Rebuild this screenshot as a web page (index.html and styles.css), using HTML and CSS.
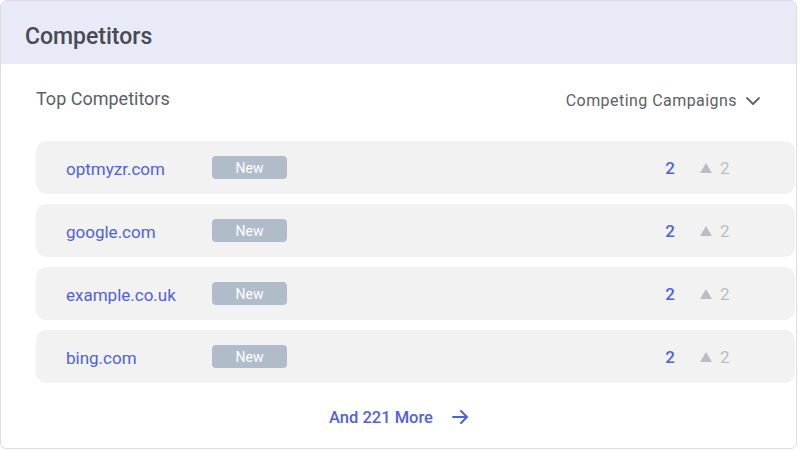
FILE: index.html
```html
<!DOCTYPE html>
<html lang="en">
<head>
    <meta charset="UTF-8">
    <meta name="viewport" content="width=device-width, initial-scale=1.0">
    <title>Competitors</title>
    <link rel="stylesheet" href="styles.css">
</head>
<body>
    <div class="card">
        <header class="card-header">
            <h2>Competitors</h2>
        </header>

        <div class="card-body">
            <div class="toolbar">
                <span class="toolbar-title">Top Competitors</span>
                <button class="sort-select">
                    Competing Campaigns
                    <svg width="16" height="16" viewBox="0 0 16 16"><path d="M2 5l6 6 6-6" fill="none" stroke="#5f6368" stroke-width="1.8" stroke-linecap="round" stroke-linejoin="round"/></svg>
                </button>
            </div>

            <ul class="competitor-list">
                <li class="competitor">
                    <span class="domain">optmyzr.com</span>
                    <span class="badge">New</span>
                    <span class="count">2</span>
                    <span class="trend"><svg class="arrow" width="12" height="10" viewBox="0 0 12 10"><path d="M6 0L12 10H0z" fill="#b9bec6"/></svg>2</span>
                </li>
                <li class="competitor">
                    <span class="domain">google.com</span>
                    <span class="badge">New</span>
                    <span class="count">2</span>
                    <span class="trend"><svg class="arrow" width="12" height="10" viewBox="0 0 12 10"><path d="M6 0L12 10H0z" fill="#b9bec6"/></svg>2</span>
                </li>
                <li class="competitor">
                    <span class="domain">example.co.uk</span>
                    <span class="badge">New</span>
                    <span class="count">2</span>
                    <span class="trend"><svg class="arrow" width="12" height="10" viewBox="0 0 12 10"><path d="M6 0L12 10H0z" fill="#b9bec6"/></svg>2</span>
                </li>
                <li class="competitor">
                    <span class="domain">bing.com</span>
                    <span class="badge">New</span>
                    <span class="count">2</span>
                    <span class="trend"><svg class="arrow" width="12" height="10" viewBox="0 0 12 10"><path d="M6 0L12 10H0z" fill="#b9bec6"/></svg>2</span>
                </li>
            </ul>

            <a class="more-link" href="#">
                And 221 More
                <svg width="20" height="20" viewBox="0 0 20 20"><path d="M3 10h14M11 4l6 6-6 6" fill="none" stroke="#4f62d8" stroke-width="2" stroke-linecap="round" stroke-linejoin="round"/></svg>
            </a>
        </div>
    </div>
</body>
</html>
```

FILE: styles.css
```css
body {
    margin: 0;
    padding: 0;
    background: #ffffff;
    font-family: Roboto, "Liberation Sans", sans-serif;
}
.card {
    width: 797px;
    height: 449px;
    box-sizing: border-box;
    border: 1px solid #dcdde0;
    border-radius: 6px;
    overflow: hidden;
    background: #ffffff;
}
.card-header {
    height: 63px;
    background: #e8eaf7;
    padding-left: 24px;
    padding-top: 8px;
    box-sizing: border-box;
    display: flex;
    align-items: center;
}
.card-header h2 {
    margin: 0;
    font-size: 23px;
    font-weight: 500;
    color: #464b56;
}
.card-body {
    padding-left: 35px;
}
.toolbar {
    height: 77px;
    display: flex;
    align-items: center;
    justify-content: space-between;
    padding-right: 35px;
    padding-bottom: 8px;
    box-sizing: border-box;
}
.toolbar-title {
    font-size: 18px;
    color: #5a5f68;
}
.sort-select {
    display: flex;
    align-items: center;
    gap: 8px;
    border: none;
    background: none;
    padding: 0;
    margin-top: 4px;
    font-family: inherit;
    font-size: 16px;
    letter-spacing: 0.45px;
    color: #5a5f68;
}
.competitor-list {
    list-style: none;
    margin: 0;
    padding: 0;
    display: flex;
    flex-direction: column;
    gap: 10px;
}
.competitor {
    width: 759px;
    height: 53px;
    background: #f2f2f3;
    border-radius: 10px;
    display: flex;
    align-items: center;
    padding-left: 30px;
    box-sizing: border-box;
}
.domain {
    width: 146px;
    font-size: 17px;
    color: #4f62d8;
    margin-top: 3px;
}
.badge {
    width: 75px;
    height: 23px;
    border-radius: 4px;
    background: #b1bccb;
    color: #ffffff;
    font-size: 14px;
    display: flex;
    align-items: center;
    justify-content: center;
}
.count {
    margin-left: auto;
    font-size: 17px;
    font-weight: 500;
    color: #4f62d8;
}
.trend {
    width: 95px;
    margin-left: 25px;
    font-size: 17px;
    color: #b9bec6;
    display: flex;
    align-items: center;
}
.arrow {
    margin-right: 8px;
    margin-top: 1px;
}
.more-link {
    display: flex;
    align-items: center;
    justify-content: center;
    gap: 17px;
    width: 797px;
    margin-left: -35px;
    height: 68px;
    text-decoration: none;
    font-size: 16.5px;
    font-weight: 500;
    color: #4f62d8;
}
```
